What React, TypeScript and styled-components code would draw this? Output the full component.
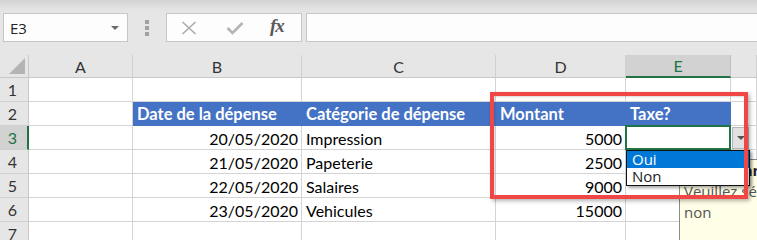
import React from "react";
import styled, { createGlobalStyle, css } from "styled-components";

const Global = createGlobalStyle`
  html, body { margin: 0; padding: 0; overflow: hidden; background: #ffffff; }
  #root { width: 757px; height: 240px; overflow: hidden; }
`;

const Page = styled.div`
  position: relative;
  width: 757px;
  height: 240px;
  overflow: hidden;
  font-family: Lato, "Liberation Sans", sans-serif;
`;

/* ---------- formula bar ---------- */
const Toolbar = styled.div`
  display: flex;
  align-items: stretch;
  height: 29px;
  padding: 13px 0 13px 3px;
  background: linear-gradient(to bottom, #d2d2d2 0px, #e3e3e3 9px, #e6e6e6 13px, #e6e6e6 100%);
`;

const NameBox = styled.div`
  box-sizing: border-box;
  width: 125px;
  display: flex;
  align-items: center;
  justify-content: space-between;
  padding: 0 8px 0 6px;
  background: #fdfdfd;
  border: 1px solid #c6c6c6;
  font-family: "Open Sans", "Noto Sans", sans-serif;
  font-size: 15px;
  color: #222;
`;

const Caret = styled.span`
  width: 0;
  height: 0;
  border-left: 4px solid transparent;
  border-right: 4px solid transparent;
  border-top: 4px solid #6a6a6a;
  margin-top: 1px;
`;

const Grip = styled.div`
  width: 38px;
  display: flex;
  flex-direction: column;
  align-items: center;
  justify-content: center;
  gap: 2px;
  span {
    width: 4px;
    height: 4px;
    background: #a0a0a0;
  }
`;

const FxBox = styled.div`
  box-sizing: border-box;
  width: 136px;
  display: flex;
  align-items: center;
  background: #fdfdfd;
  border: 1px solid #c6c6c6;
  padding-left: 14px;
`;

const IconSlot = styled.div<{ $w: number }>`
  width: ${(p) => p.$w}px;
  display: flex;
  align-items: center;
  justify-content: flex-start;
`;

const FxText = styled.span`
  font-family: "Liberation Serif", "DejaVu Serif", serif;
  font-style: italic;
  font-weight: bold;
  font-size: 19px;
  color: #5a5a5a;
  letter-spacing: -1px;
  margin-top: -3px;
`;

const FormulaInput = styled.div`
  flex: 1;
  margin-left: 4px;
  background: #fdfdfd;
  border: 1px solid #c6c6c6;
  border-right: none;
`;

/* ---------- sheet ---------- */
const Sheet = styled.div`
  display: grid;
  grid-template-columns: 29px 104px 169px 194px 130px 105px 1fr;
  grid-auto-rows: 24px;
  grid-template-rows: 23px;
  background: #ffffff;
  font-size: 16px;
  color: #000;
`;

const Corner = styled.div`
  box-sizing: border-box;
  background: #e6e6e6;
  border-right: 1px solid #c8c8c8;
  border-bottom: 1px solid #c8c8c8;
  display: flex;
  align-items: flex-end;
  justify-content: flex-end;
  padding: 0 3px 3px 0;
  &::after {
    content: "";
    width: 0;
    height: 0;
    border-left: 16px solid transparent;
    border-bottom: 16px solid #b4b4b4;
  }
`;

const ColHead = styled.div<{ $active?: boolean }>`
  box-sizing: border-box;
  background: #e6e6e6;
  border-right: 1px solid #d0d0d0;
  border-bottom: 1px solid #c8c8c8;
  display: flex;
  align-items: center;
  justify-content: center;
  color: #333;
  font-size: 16px;
  ${(p) =>
    p.$active &&
    css`
      background: #d2d2d2;
      border-bottom: 2px solid #217346;
      border-right-color: #c0c0c0;
      color: #217346;
    `}
`;

const RowHead = styled.div<{ $active?: boolean }>`
  box-sizing: border-box;
  background: #e6e6e6;
  border-right: 1px solid #c8c8c8;
  border-bottom: 1px solid #d0d0d0;
  display: flex;
  align-items: center;
  justify-content: center;
  padding-right: 3px;
  color: #333;
  font-size: 16px;
  ${(p) =>
    p.$active &&
    css`
      background: #d2d2d2;
      border-right: 2px solid #217346;
      padding-right: 2px;
      color: #217346;
    `}
`;

const Cell = styled.div<{ $align?: "left" | "right"; $head?: boolean }>`
  box-sizing: border-box;
  border-right: 1px solid #d4d4d4;
  border-bottom: 1px solid #d4d4d4;
  display: flex;
  align-items: center;
  justify-content: ${(p) => (p.$align === "right" ? "flex-end" : "flex-start")};
  padding: 1px 3px 0 4px;
  white-space: nowrap;
  overflow: hidden;
  ${(p) =>
    p.$head &&
    css`
      justify-content: flex-start;
      background: #4472c4;
      border-color: #4472c4;
      color: #ffffff;
      font-weight: bold;
      font-size: 16.5px;
    `}
`;

/* ---------- overlays ---------- */
const Selection = styled.div`
  position: absolute;
  left: 625px;
  top: 125px;
  width: 106px;
  height: 25px;
  box-sizing: border-box;
  border: 2px solid #217346;
`;

const DropButton = styled.div`
  position: absolute;
  left: 732px;
  top: 127px;
  width: 17px;
  height: 22px;
  box-sizing: border-box;
  background: #e1e1e1;
  border: 1px solid #b5b5b5;
  display: flex;
  align-items: center;
  justify-content: center;
  &::after {
    content: "";
    border-left: 4px solid transparent;
    border-right: 4px solid transparent;
    border-top: 4px solid #555;
  }
`;

const Tip = styled.div`
  position: absolute;
  left: 679px;
  top: 159px;
  width: 240px;
  height: 110px;
  box-sizing: border-box;
  background: #fffee6;
  border: 1px solid #8a8a8a;
  padding: 0 0 0 4px;
  font-family: "Open Sans", "Noto Sans", sans-serif;
  font-size: 15px;
  line-height: 21px;
  color: #555;
  white-space: nowrap;
`;

const TipTitle = styled.div`
  font-weight: bold;
  color: #222;
`;

const DropList = styled.div`
  position: absolute;
  left: 626px;
  top: 150px;
  width: 124px;
  box-sizing: border-box;
  background: #ffffff;
  border: 1px solid #111;
  box-shadow: 2px 2px 3px rgba(0, 0, 0, 0.35);
  font-family: "Open Sans", "Noto Sans", sans-serif;
  font-size: 15px;
`;

const Option = styled.div<{ $on?: boolean }>`
  height: 17px;
  line-height: 17px;
  padding-left: 5px;
  color: ${(p) => (p.$on ? "#ffffff" : "#222")};
  background: ${(p) => (p.$on ? "#0078d7" : "transparent")};
`;

const Highlight = styled.div`
  position: absolute;
  left: 490px;
  top: 92px;
  width: 258px;
  height: 107px;
  box-sizing: border-box;
  border: 4px solid #f04646;
  box-shadow: 2px 2px 4px rgba(0, 0, 0, 0.3), inset 1px 1px 2px rgba(0, 0, 0, 0.15);
`;

type Row = { n: number; cells: string[]; head?: boolean };

const rows: Row[] = [
  { n: 1, cells: ["", "", "", "", "", ""] },
  { n: 2, cells: ["", "Date de la dépense", "Catégorie de dépense", "Montant", "Taxe?", ""], head: true },
  { n: 3, cells: ["", "20/05/2020", "Impression", "5000", "", ""] },
  { n: 4, cells: ["", "21/05/2020", "Papeterie", "2500", "", ""] },
  { n: 5, cells: ["", "22/05/2020", "Salaires", "9000", "", ""] },
  { n: 6, cells: ["", "23/05/2020", "Vehicules", "15000", "", ""] },
  { n: 7, cells: ["", "", "", "", "", ""] },
  { n: 8, cells: ["", "", "", "", "", ""] },
];

const cols = ["A", "B", "C", "D", "E", ""];
const align: ("left" | "right")[] = ["left", "right", "left", "right", "left", "left"];

export default function App() {
  return (
    <Page>
      <Global />
      <Toolbar>
        <NameBox>
          <span>E3</span>
          <Caret />
        </NameBox>
        <Grip>
          <span />
          <span />
          <span />
        </Grip>
        <FxBox>
          <IconSlot $w={45}>
            <svg width="16" height="14" viewBox="0 0 16 14">
              <path d="M1.5 1 L14.5 13 M14.5 1 L1.5 13" stroke="#ababab" strokeWidth="1.6" fill="none" />
            </svg>
          </IconSlot>
          <IconSlot $w={44}>
            <svg width="18" height="14" viewBox="0 0 18 14">
              <path d="M1.5 7 L6.5 12 L16.5 2" stroke="#b4b4b4" strokeWidth="2.6" fill="none" />
            </svg>
          </IconSlot>
          <IconSlot $w={30}>
            <FxText>fx</FxText>
          </IconSlot>
        </FxBox>
        <FormulaInput />
      </Toolbar>

      <Sheet>
        <Corner />
        {cols.map((c, i) => (
          <ColHead key={i} $active={c === "E"}>
            {c}
          </ColHead>
        ))}
        {rows.map((r) => (
          <React.Fragment key={r.n}>
            <RowHead $active={r.n === 3}>{r.n}</RowHead>
            {r.cells.map((v, i) => (
              <Cell key={i} $align={align[i]} $head={r.head && i >= 1 && i <= 4}>
                {v}
              </Cell>
            ))}
          </React.Fragment>
        ))}
      </Sheet>

      <Selection />
      <Tip>
        <TipTitle>Sélectionnez</TipTitle>
        <div>Veuillez sélectionner oui ou</div>
        <div>non</div>
      </Tip>
      <DropButton />
      <DropList>
        <Option $on>Oui</Option>
        <Option>Non</Option>
      </DropList>
      <Highlight />
    </Page>
  );
}
